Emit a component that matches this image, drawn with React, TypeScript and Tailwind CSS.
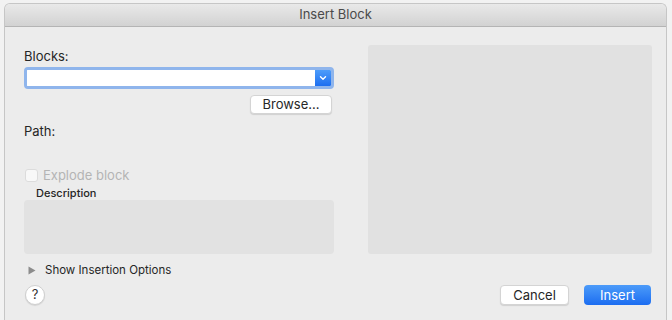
import React from 'react'

const font = { fontFamily: 'Inter, "Open Sans", "Liberation Sans", sans-serif' }

export default function App() {
  return (
    <div className="w-[672px] h-[320px] bg-[#f2f2f2] pl-[4px] pr-[5px] pt-[3px]" style={font}>
      <div className="h-full flex flex-col border-x border-t border-[#c6c6c6] rounded-t-[6px] bg-[#ececec] overflow-hidden">
        {/* Title bar */}
        <div className="h-[23px] shrink-0 flex items-center justify-center bg-gradient-to-b from-[#e9e9e9] to-[#d2d2d2] border-b border-[#b4b4b4] text-[13px] text-[#4a4a4a]">
          Insert Block
        </div>

        <div className="flex flex-col pl-[19px] pr-[14px] pt-[18px]">
          <div className="flex">
            {/* Left column */}
            <div className="w-[310px] flex flex-col">
              <div className="mt-[3px] h-[16px] leading-[16px] text-[13px] text-[#262626]">Blocks:</div>

              <div className="mt-[3px] h-[22px] flex rounded-[4px] border-[3px] border-[#8fb5ec] bg-white overflow-hidden">
                <div className="flex-1 bg-white"></div>
                <div className="w-[16px] flex items-center justify-center bg-gradient-to-b from-[#4d9cfa] to-[#1c6ef0]">
                  <svg width="8" height="6" viewBox="0 0 8 6">
                    <path d="M1.5 1.8 L4 4.2 L6.5 1.8" fill="none" stroke="white" strokeWidth="1.4" strokeLinecap="round" strokeLinejoin="round" />
                  </svg>
                </div>
              </div>

              <button className="mt-[6px] mr-[2px] self-end w-[82px] h-[19px] rounded-[4px] bg-white border border-[#d4d4d4] shadow-[0_1px_1px_rgba(0,0,0,0.12)] text-[13px] leading-none text-[#262626]">
                Browse...
              </button>

              <div className="mt-[9px] h-[16px] leading-[16px] text-[13px] text-[#262626]">Path:</div>

              <div className="mt-[28px] h-[16px] flex items-center gap-[5px] pl-[1px]">
                <div className="w-[13px] h-[13px] rounded-[3px] bg-[#f8f8f8] border border-[#dcdcdc]"></div>
                <span className="text-[13px] leading-[16px] text-[#b4b4b4]">Explode block</span>
              </div>

              <div className="mt-[3px] h-[14px] leading-[14px] pl-[12px] text-[11px] font-medium text-[#262626]">Description</div>

              <div className="h-[54px] rounded-[4px] bg-[#e2e2e2]"></div>

              <div className="mt-[9px] h-[14px] flex items-center">
                <svg width="8" height="9" viewBox="0 0 8 9" className="ml-[4px]">
                  <path d="M0.5 0.5 L7.5 4.5 L0.5 8.5 Z" fill="#8c8c8c" />
                </svg>
                <span className="ml-[9px] text-[11.5px] leading-[14px] text-[#262626]">Show Insertion Options</span>
              </div>
            </div>

            {/* Preview */}
            <div className="ml-[34px] w-[284px] h-[209px] rounded-[3px] bg-[#e1e1e1]"></div>
          </div>

          {/* Bottom row */}
          <div className="mt-[8px] h-[20px] flex items-center">
            <div className="ml-[1px] w-[20px] h-[20px] rounded-full bg-white border border-[#cfcfcf] shadow-[0_1px_1px_rgba(0,0,0,0.1)] flex items-center justify-center text-[13px] text-[#333]">
              ?
            </div>
            <div className="ml-auto flex gap-[15px] mr-[1px]">
              <button className="w-[69px] h-[20px] rounded-[4px] bg-white border border-[#d4d4d4] shadow-[0_1px_1px_rgba(0,0,0,0.12)] text-[13px] leading-none text-[#262626]">
                Cancel
              </button>
              <button className="w-[67px] h-[20px] rounded-[4px] bg-gradient-to-b from-[#4c9bf9] to-[#1b6cf0] text-[13px] leading-none text-white">
                Insert
              </button>
            </div>
          </div>
        </div>
      </div>
    </div>
  )
}
